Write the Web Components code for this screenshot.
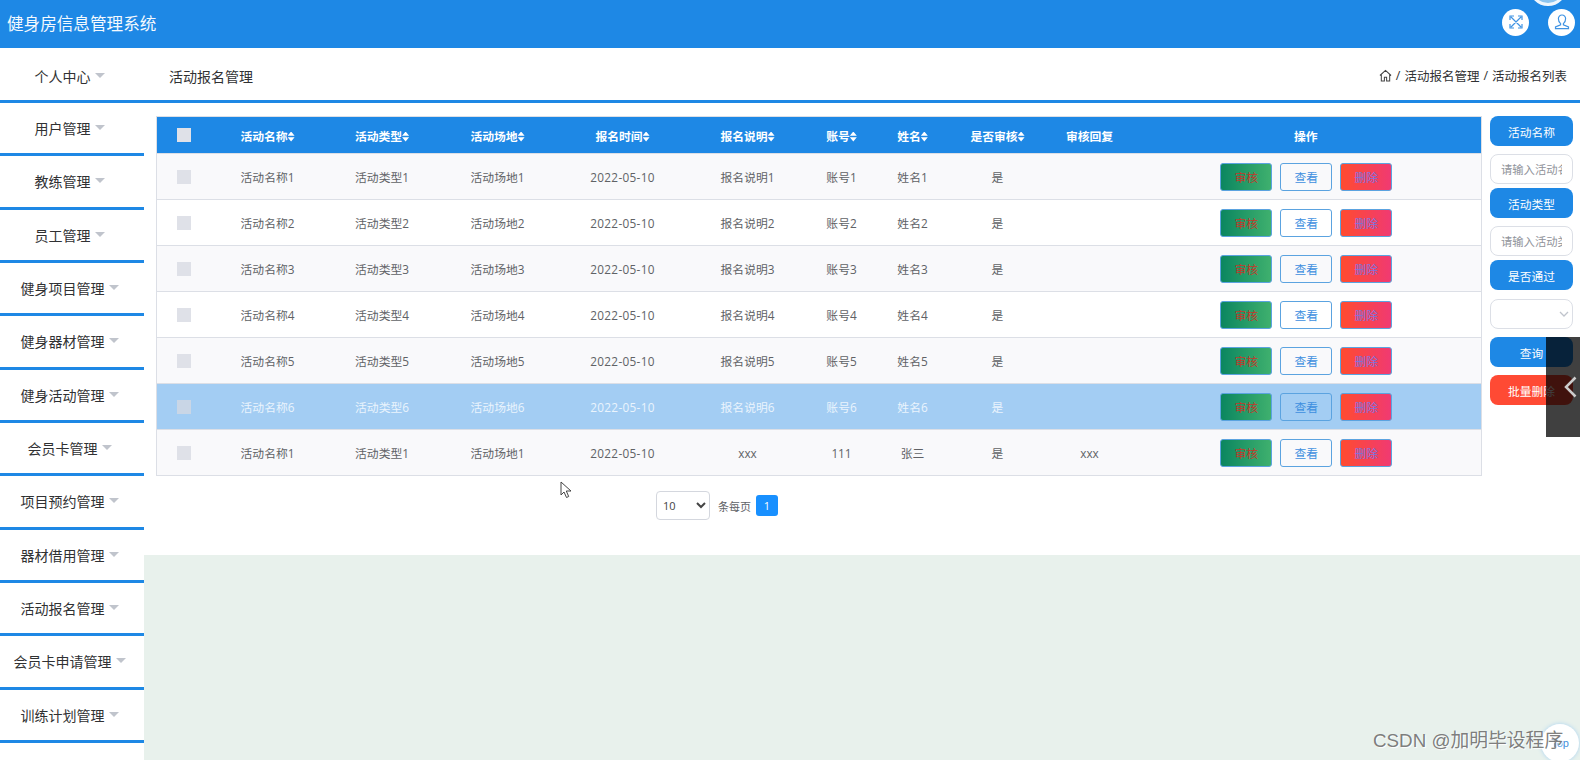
<!DOCTYPE html>
<html lang="zh">
<head>
<meta charset="utf-8">
<title>健身房信息管理系统</title>
<style>
    html, body {
        margin: 0;
        height: 760px;
        overflow: hidden;
        font-family: "Open Sans", "Noto Sans CJK SC", "Liberation Sans", sans-serif;
        background: #fff;
    }
    .layout {
        display: flex;
        height: 712px;
    }
</style>
</head>
<body>
<app-header title="健身房信息管理系统"></app-header>
<div class="layout">
    <side-menu></side-menu>
    <main-view>
        <crumb-bar></crumb-bar>
    </main-view>
</div>
<page-extras></page-extras>

<script>
class AppHeader extends HTMLElement {
    constructor() {
        super();
        this.attachShadow({ mode: 'open' });
    }

    connectedCallback() {
        this.shadowRoot.innerHTML = `
        <style>
            :host {
                display: flex;
                align-items: center;
                justify-content: space-between;
                height: 48px;
                background: #1e88e5;
                padding: 0 5px 0 7px;
                position: relative;
                overflow: hidden;
            }
            .title {
                color: #f4f9fe;
                font-size: 16.6px;
                line-height: 48px;
            }
            .tools {
                display: flex;
                gap: 19px;
                margin-top: -4px;
            }
            .tool {
                width: 27px;
                height: 27px;
                border-radius: 50%;
                background: #fff;
                display: flex;
                align-items: center;
                justify-content: center;
            }
            .avatar {
                position: absolute;
                left: 1529px;
                top: -32px;
                width: 32px;
                height: 32px;
                border-radius: 50%;
                border: 3px solid #eef6fd;
                background: #8cc4ef;
            }
        </style>
        <div class="title">${this.getAttribute('title')}</div>
        <div class="tools">
            <div class="tool">
                <svg width="16" height="16" viewBox="0 0 16 16" fill="none" stroke="#3f93e3" stroke-width="1.2">
                    <path d="M3 3l10 10M13 3L3 13M2 6V2h4M10 2h4v4M14 10v4h-4M6 14H2v-4"/>
                </svg>
            </div>
            <div class="tool">
                <svg width="18" height="18" viewBox="0 0 18 18" fill="none" stroke="#3f93e3" stroke-width="1.2">
                    <path d="M9 2a3.6 3.6 0 0 1 3.6 3.8c0 2.2-1.2 4-2.2 4.8v1.2L15.5 14v1.6h-13V14l5.1-2.2v-1.2C6.600 9.800 5.400 8 5.400 5.800A3.600 3.600 0 0 1 9 2z"/>
                </svg>
            </div>
        </div>
        <div class="avatar"></div>
        `;
    }
}

class SideMenu extends HTMLElement {
    constructor() {
        super();
        this.attachShadow({ mode: 'open' });
    }

    connectedCallback() {
        const items = [
            "个人中心", "用户管理", "教练管理", "员工管理", "健身项目管理", "健身器材管理",
            "健身活动管理", "会员卡管理", "项目预约管理", "器材借用管理", "活动报名管理",
            "会员卡申请管理", "训练计划管理"
        ];

        this.shadowRoot.innerHTML = `
        <style>
            :host {
                display: block;
                flex: 0 0 144px;
                background: #fff;
            }
            .item {
                box-sizing: border-box;
                height: 53.34px;
                border-bottom: 3px solid #1e88e5;
                display: flex;
                align-items: center;
                justify-content: center;
                gap: 4px;
                padding-right: 5px;
                color: #303133;
                font-size: 14px;
            }
            .item:first-of-type {
                height: 55px;
                padding-top: 3px;
            }
            .caret {
                width: 0;
                height: 0;
                border-left: 5px solid transparent;
                border-right: 5px solid transparent;
                border-top: 5px solid #c0c4cc;
                margin-top: -1px;
            }
        </style>
        ${items.map((item) => `
            <div class="item"><span>${item}</span><i class="caret"></i></div>
        `).join('')}
        `;
    }
}

class CrumbBar extends HTMLElement {
    constructor() {
        super();
        this.attachShadow({ mode: 'open' });
    }

    connectedCallback() {
        this.shadowRoot.innerHTML = `
        <style>
            :host {
                display: flex;
                box-sizing: border-box;
                align-items: center;
                justify-content: space-between;
                height: 55px;
                border-bottom: 3px solid #1e88e5;
                padding: 3px 13px 0 25px;
                color: #303133;
                font-size: 14px;
            }
            .path {
                display: flex;
                align-items: center;
                gap: 4px;
                font-size: 12.5px;
            }
        </style>
        <div>活动报名管理</div>
        <div class="path">
            <svg width="13" height="13" viewBox="0 0 14 14" fill="none" stroke="#444" stroke-width="1.1">
                <path d="M1 7l6-5.500L13 7M2.500 6v7h3.300V9h2.400v4h3.300V6"/>
            </svg>
            <span>/</span><span>活动报名管理</span><span>/</span><span>活动报名列表</span>
        </div>
        `;
    }
}

class SignupTable extends HTMLElement {
    constructor() {
        super();
        this.attachShadow({ mode: 'open' });
    }

    connectedCallback() {
        const widths = [55, 112, 117, 114, 136, 114, 74, 68, 102, 82, 351];
        const heads = ["活动名称", "活动类型", "活动场地", "报名时间", "报名说明", "账号", "姓名", "是否审核"];
        const rows = [1, 2, 3, 4, 5, 6].map((n) => [
            `活动名称${n}`, `活动类型${n}`, `活动场地${n}`, "2022-05-10", `报名说明${n}`, `账号${n}`, `姓名${n}`, "是", ""
        ]);
        rows.push(["活动名称1", "活动类型1", "活动场地1", "2022-05-10", "xxx", "111", "张三", "是", "xxx"]);

        this.shadowRoot.innerHTML = `
        <style>
            :host {
                display: block;
                flex: 0 0 1325px;
            }
            table {
                width: 1325px;
                table-layout: fixed;
                border-collapse: collapse;
                border: 1px solid #dcdfe6;
                font-size: 11.8px;
                color: #606266;
            }
            th {
                height: 36px;
                padding: 0;
                background: #1e88e5;
                color: #fff;
                font-weight: 700;
            }
            td {
                height: 45px;
                padding: 0;
                text-align: center;
                border-top: 1px solid #dcdfe6;
            }
            td.date {
                letter-spacing: 0.3px;
            }
            tbody tr:nth-child(odd) {
                background: #f9f9fb;
            }
            tbody tr.on {
                background: #a3cdf3;
                color: #eaf4fd;
            }
            .check {
                display: block;
                width: 14px;
                height: 14px;
                margin: 0 0 0 20px;
                background: #dfe1e8;
            }
            tr.on .check {
                background: #c9d6e6;
            }
            .sort {
                display: inline-block;
                vertical-align: -1px;
                width: 7px;
                height: 10px;
                background: #fff;
                clip-path: polygon(50% 0, 100% 42%, 0 42%, 0 58%, 100% 58%, 50% 100%, 0 58%, 0 42%);
            }
            .actions {
                display: flex;
                justify-content: center;
                gap: 8px;
                padding-left: 1px;
            }
            button {
                box-sizing: border-box;
                width: 52px;
                height: 28px;
                padding: 0;
                border-radius: 3px;
                border: 1px solid #5ba3e0;
                font: inherit;
                letter-spacing: 0;
                cursor: pointer;
            }
            .pass {
                background: linear-gradient(to right, #0b8660, #3fb06e);
                color: #c0392b;
            }
            .view {
                background: transparent;
                color: #3d8fdf;
            }
            .del {
                background: linear-gradient(to right, #ff4b2f, #f03a72);
                color: #7d74e0;
            }
        </style>
        <table>
            <colgroup>${widths.map((w) => `<col style="width:${w}px">`).join('')}</colgroup>
            <thead>
                <tr>
                    <th><span class="check"></span></th>
                    ${heads.map((h) => `<th>${h}<i class="sort"></i></th>`).join('')}
                    <th>审核回复</th>
                    <th>操作</th>
                </tr>
            </thead>
            <tbody>
                ${rows.map((row, i) => `
                    <tr class="${i === 5 ? 'on' : ''}">
                        <td><span class="check"></span></td>
                        ${row.map((cell, c) => `<td class="${c === 3 ? 'date' : ''}">${cell}</td>`).join('')}
                        <td>
                            <div class="actions">
                                <button class="pass">审核</button>
                                <button class="view">查看</button>
                                <button class="del">删除</button>
                            </div>
                        </td>
                    </tr>
                `).join('')}
            </tbody>
        </table>
        `;
    }
}

class FilterPanel extends HTMLElement {
    constructor() {
        super();
        this.attachShadow({ mode: 'open' });
    }

    connectedCallback() {
        this.shadowRoot.innerHTML = `
        <style>
            :host {
                display: flex;
                flex-direction: column;
                flex: 0 0 83px;
                font-size: 11.7px;
            }
            .label, button {
                box-sizing: border-box;
                height: 30px;
                border: 0;
                border-radius: 8px;
                background: #1e88e5;
                color: #fff;
                font: inherit;
                display: flex;
                align-items: center;
                justify-content: center;
                padding: 0;
            }
            .field {
                box-sizing: border-box;
                height: 30px;
                width: 83px;
                margin: 8px 0 4px;
                padding: 0 10px;
                border: 1px solid #dcdfe6;
                border-radius: 8px;
                background: #fff;
                font: inherit;
                font-size: 11.3px;
                outline: none;
            }
            .field::placeholder {
                color: #8f9299;
            }
            .select {
                position: relative;
                margin-bottom: 8px;
            }
            .select .field {
                display: block;
                appearance: none;
                margin: 9px 0 0;
            }
            .select svg {
                position: absolute;
                right: 4px;
                top: 21px;
            }
            button {
                margin-bottom: 8px;
            }
            .danger {
                background: #ff4a34;
            }
        </style>
        <div class="label">活动名称</div>
        <input class="field" placeholder="请输入活动名称">
        <div class="label">活动类型</div>
        <input class="field" placeholder="请输入活动类型">
        <div class="label">是否通过</div>
        <div class="select">
            <select class="field"><option></option><option>是</option><option>否</option></select>
            <svg width="10" height="7" viewBox="0 0 10 7" fill="none" stroke="#c0c4cc" stroke-width="1.300"><path d="M1 1l4 4 4-4"/></svg>
        </div>
        <button>查询</button>
        <button class="danger">批量删除</button>
        `;
    }
}

class PagerBar extends HTMLElement {
    constructor() {
        super();
        this.attachShadow({ mode: 'open' });
    }

    connectedCallback() {
        this.shadowRoot.innerHTML = `
        <style>
            :host {
                display: flex;
                align-items: center;
                padding-left: 500px;
                margin-top: 17px;
                font-size: 11px;
                color: #606266;
            }
            select {
                width: 54px;
                height: 29px;
                border: 1px solid #d4d7de;
                border-radius: 4px;
                background: #fff;
                font-size: 11px;
                font-family: inherit;
                color: #444;
                padding-left: 2px;
                margin-right: 8px;
            }
            .page {
                width: 22px;
                height: 21px;
                margin-left: 5px;
                border-radius: 3px;
                background: #1890ff;
                color: #fff;
                display: flex;
                align-items: center;
                justify-content: center;
            }
        </style>
        <select><option>10</option><option>20</option></select>
        <span>条每页</span>
        <span class="page">1</span>
        `;
    }
}

class MainView extends HTMLElement {
    constructor() {
        super();
        this.attachShadow({ mode: 'open' });
    }

    connectedCallback() {
        this.shadowRoot.innerHTML = `
        <style>
            :host {
                display: block;
                flex: 1;
                background: #e8f1ec;
            }
            .sheet {
                height: 507px;
                box-sizing: border-box;
                background: #fff;
            }
            .content {
                padding: 13px 0 0 12px;
            }
            .columns {
                display: flex;
                gap: 8px;
                align-items: flex-start;
                height: 358px;
            }
        </style>
        <div class="sheet">
            <slot></slot>
            <div class="content">
                <div class="columns">
                    <signup-table></signup-table>
                    <filter-panel></filter-panel>
                </div>
                <pager-bar></pager-bar>
            </div>
        </div>
        `;
    }
}

// what the recording left lying over the page
class PageExtras extends HTMLElement {
    constructor() {
        super();
        this.attachShadow({ mode: 'open' });
    }

    connectedCallback() {
        this.shadowRoot.innerHTML = `
        <style>
            :host {
                display: block;
            }
            .drawer {
                position: absolute;
                left: 1546px;
                top: 337px;
                width: 34px;
                height: 100px;
                background: rgba(0, 0, 0, 0.75);
                display: flex;
                align-items: center;
                justify-content: flex-end;
            }
            .drawer svg {
                margin-right: 3px;
            }
            .top {
                position: absolute;
                left: 1541px;
                top: 724px;
                width: 38px;
                height: 38px;
                border-radius: 50%;
                background: #fff;
                box-shadow: 0 0 4px #a9d3f2;
                color: #3f8fdc;
                font: 11px "Liberation Sans", sans-serif;
                line-height: 38px;
                text-align: center;
            }
            .mark {
                position: absolute;
                left: 1373px;
                top: 727px;
                font: 18.8px "Liberation Sans", "Noto Sans CJK SC", sans-serif;
                line-height: 28px;
                color: rgba(110, 110, 110, 0.9);
                text-shadow: 1px 1px 1px #fff;
                white-space: nowrap;
            }
            .cursor {
                position: absolute;
                left: 560px;
                top: 481px;
            }
        </style>
        <div class="drawer">
            <svg width="13" height="22" viewBox="0 0 13 22" fill="none" stroke="#ccc" stroke-width="2.500"><path d="M11.500 1.500L2 11l9.500 9.500"/></svg>
        </div>
        <div class="top">Top</div>
        <div class="mark">CSDN @加明毕设程序</div>
        <svg class="cursor" width="12" height="18" viewBox="0 0 12 18" fill="#fff" stroke="#444" stroke-width="1">
            <path d="M1 1v13l3-3 2.500 5.500 2.200-1L6.300 10H11z"/>
        </svg>
        `;
    }
}

customElements.define('app-header', AppHeader);
customElements.define('side-menu', SideMenu);
customElements.define('crumb-bar', CrumbBar);
customElements.define('signup-table', SignupTable);
customElements.define('filter-panel', FilterPanel);
customElements.define('pager-bar', PagerBar);
customElements.define('main-view', MainView);
customElements.define('page-extras', PageExtras);
</script>
</body>
</html>
